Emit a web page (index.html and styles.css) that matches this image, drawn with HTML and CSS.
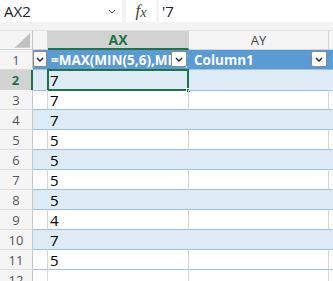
FILE: index.html
```html
<!doctype html>
<html lang=en>
<head>
    <meta charset="utf-8">
    <title>Sheet - AX2</title>
    <link rel="stylesheet" href="styles.css">
</head>
<body>
    <div class="bar">
        <div class="namebox">
            <span>AX2</span>
            <svg class="chev" width="8" height="5" viewBox="0 0 8 5"><path d="M1 1 L4 4 L7 1" fill="none" stroke="#555" stroke-width="1"/></svg>
        </div>
        <div class="fx"><i>f</i><i class="x">x</i></div>
        <div class="formula">'7</div>
    </div>

    <div class="sheet">
        <div class="row colhead">
            <div class="corner"><svg width="33" height="19" viewBox="0 0 33 19"><polygon points="15,17 31,17 31,2" fill="#c0c0c0"/></svg></div>
            <div class="ch"></div>
            <div class="ch active">AX</div>
            <div class="ch">AY</div>
            <div class="ch last"></div>
        </div>

        <div class="row thead">
            <div class="rh">1</div>
            <div class="c"><span class="dd"><svg width="8" height="5" viewBox="0 0 8 5"><path d="M1 1 L4 4 L7 1" fill="none" stroke="#222" stroke-width="1.4"/></svg></span></div>
            <div class="c"><span class="htext">=MAX(MIN(5,6),MIN(7,8))</span><span class="dd"><svg width="8" height="5" viewBox="0 0 8 5"><path d="M1 1 L4 4 L7 1" fill="none" stroke="#222" stroke-width="1.4"/></svg></span></div>
            <div class="c"><span class="htext">Column1</span><span class="dd"><svg width="8" height="5" viewBox="0 0 8 5"><path d="M1 1 L4 4 L7 1" fill="none" stroke="#222" stroke-width="1.4"/></svg></span></div>
            <div class="c last"><span class="htext">Column2</span></div>
        </div>

        <div class="row band">
            <div class="rh current">2</div>
            <div class="c"></div>
            <div class="c selected">7<span class="sel"><span class="handle"></span></span></div>
            <div class="c"></div>
            <div class="c last"></div>
        </div>
        <div class="row">
            <div class="rh">3</div><div class="c"></div><div class="c">7</div><div class="c"></div><div class="c last"></div>
        </div>
        <div class="row band">
            <div class="rh">4</div><div class="c"></div><div class="c">7</div><div class="c"></div><div class="c last"></div>
        </div>
        <div class="row">
            <div class="rh">5</div><div class="c"></div><div class="c">5</div><div class="c"></div><div class="c last"></div>
        </div>
        <div class="row band">
            <div class="rh">6</div><div class="c"></div><div class="c">5</div><div class="c"></div><div class="c last"></div>
        </div>
        <div class="row">
            <div class="rh">7</div><div class="c"></div><div class="c">5</div><div class="c"></div><div class="c last"></div>
        </div>
        <div class="row band">
            <div class="rh">8</div><div class="c"></div><div class="c">5</div><div class="c"></div><div class="c last"></div>
        </div>
        <div class="row">
            <div class="rh">9</div><div class="c"></div><div class="c">4</div><div class="c"></div><div class="c last"></div>
        </div>
        <div class="row band">
            <div class="rh">10</div><div class="c"></div><div class="c">7</div><div class="c"></div><div class="c last"></div>
        </div>
        <div class="row">
            <div class="rh">11</div><div class="c"></div><div class="c">5</div><div class="c"></div><div class="c last"></div>
        </div>
        <div class="row plain">
            <div class="rh">12</div><div class="c"></div><div class="c"></div><div class="c"></div><div class="c last"></div>
        </div>
    </div>
</body>
</html>
```

FILE: styles.css
```css
* {
    padding: 0;
    margin: 0;
    box-sizing: border-box;
}
body {
    font-family: "Open Sans", "Noto Sans", sans-serif;
    font-size: 14px;
    color: #000;
    background: #fff;
    width: 333px;
    height: 281px;
    overflow: hidden;
}
.bar {
    display: flex;
    gap: 4px;
    height: 31px;
    padding-bottom: 8px;
    background: #f3f3f3;
    border-bottom: 1px solid #e1e1e1;
}
.namebox {
    width: 122px;
    background: #fff;
    display: flex;
    align-items: center;
    justify-content: space-between;
    padding: 0 6px 0 4px;
    font-size: 15px;
    color: #222;
}
.fx {
    width: 30px;
    background: #fff;
    display: flex;
    align-items: center;
    justify-content: center;
    font-family: "Liberation Serif", serif;
    font-size: 17px;
    color: #444;
    margin-right: -1px;
}
.fx .x {
    font-size: 14px;
    margin-top: 3px;
}
.formula {
    flex: 1;
    background: #fff;
    display: flex;
    align-items: center;
    padding-left: 3px;
    font-size: 15px;
    color: #222;
}
.row {
    display: grid;
    grid-template-columns: 33px 15px 141px 140px 1fr;
    height: 20px;
}
.row > div {
    border-right: 1px solid #d4d4d4;
    border-bottom: 1px solid #9bc2e6;
    display: flex;
    align-items: center;
    white-space: nowrap;
    overflow: hidden;
    position: relative;
}
.row > .last {
    border-right: none;
}
.colhead {
    height: 19px;
    background: #f5f5f5;
}
.colhead > div {
    border-bottom: 1px solid #d4d4d4;
    justify-content: center;
    color: #444;
    font-size: 13px;
}
.colhead > .corner {
    border-right: 1px solid #c6c6c6;
}
.colhead > .active {
    background: #d2d2d2;
    color: #217346;
    font-weight: bold;
    font-size: 14px;
    border-bottom: 2px solid #217346;
}
.rh {
    justify-content: center;
    background: #f5f5f5;
    color: #555;
    font-size: 13px;
    border-right-color: #c6c6c6 !important;
    border-bottom-color: #dcdcdc !important;
}
.rh.current {
    background: #d2d2d2;
    color: #217346;
    font-weight: bold;
    border-right: 2px solid #217346 !important;
}
.c {
    padding-left: 2px;
    font-size: 15px;
}
.band > .c {
    background: #ddebf7;
    border-right-color: #ddebf7;
}
.thead > .c {
    background: #5b9bd5;
    border-right-color: #5b9bd5;
    color: #fff;
    font-weight: bold;
    font-size: 13.5px;
    overflow: hidden;
}
.thead > .c:nth-child(2) {
    padding-left: 0;
}
.plain > div {
    border-bottom-color: #d4d4d4;
}
.htext {
    padding-left: 1px;
}
.thead > .c:nth-child(4) .htext {
    padding-left: 3px;
}
.dd {
    position: absolute;
    right: 1px;
    top: 1px;
    width: 16px;
    height: 16px;
    background: #fff;
    border: 1px solid #8a8a8a;
    border-radius: 2px;
    display: flex;
    align-items: center;
    justify-content: center;
}
.thead > .c:nth-child(2) .dd {
    left: 0;
    right: auto;
    width: 14px;
}
.selected {
    overflow: visible !important;
}
.sel {
    position: absolute;
    left: -1px;
    top: -1px;
    right: -1px;
    bottom: -1px;
    border: 2px solid #217346;
}
.handle {
    position: absolute;
    right: -4px;
    bottom: -4px;
    width: 5px;
    height: 5px;
    background: #217346;
    border: 1px solid #fff;
}
```
